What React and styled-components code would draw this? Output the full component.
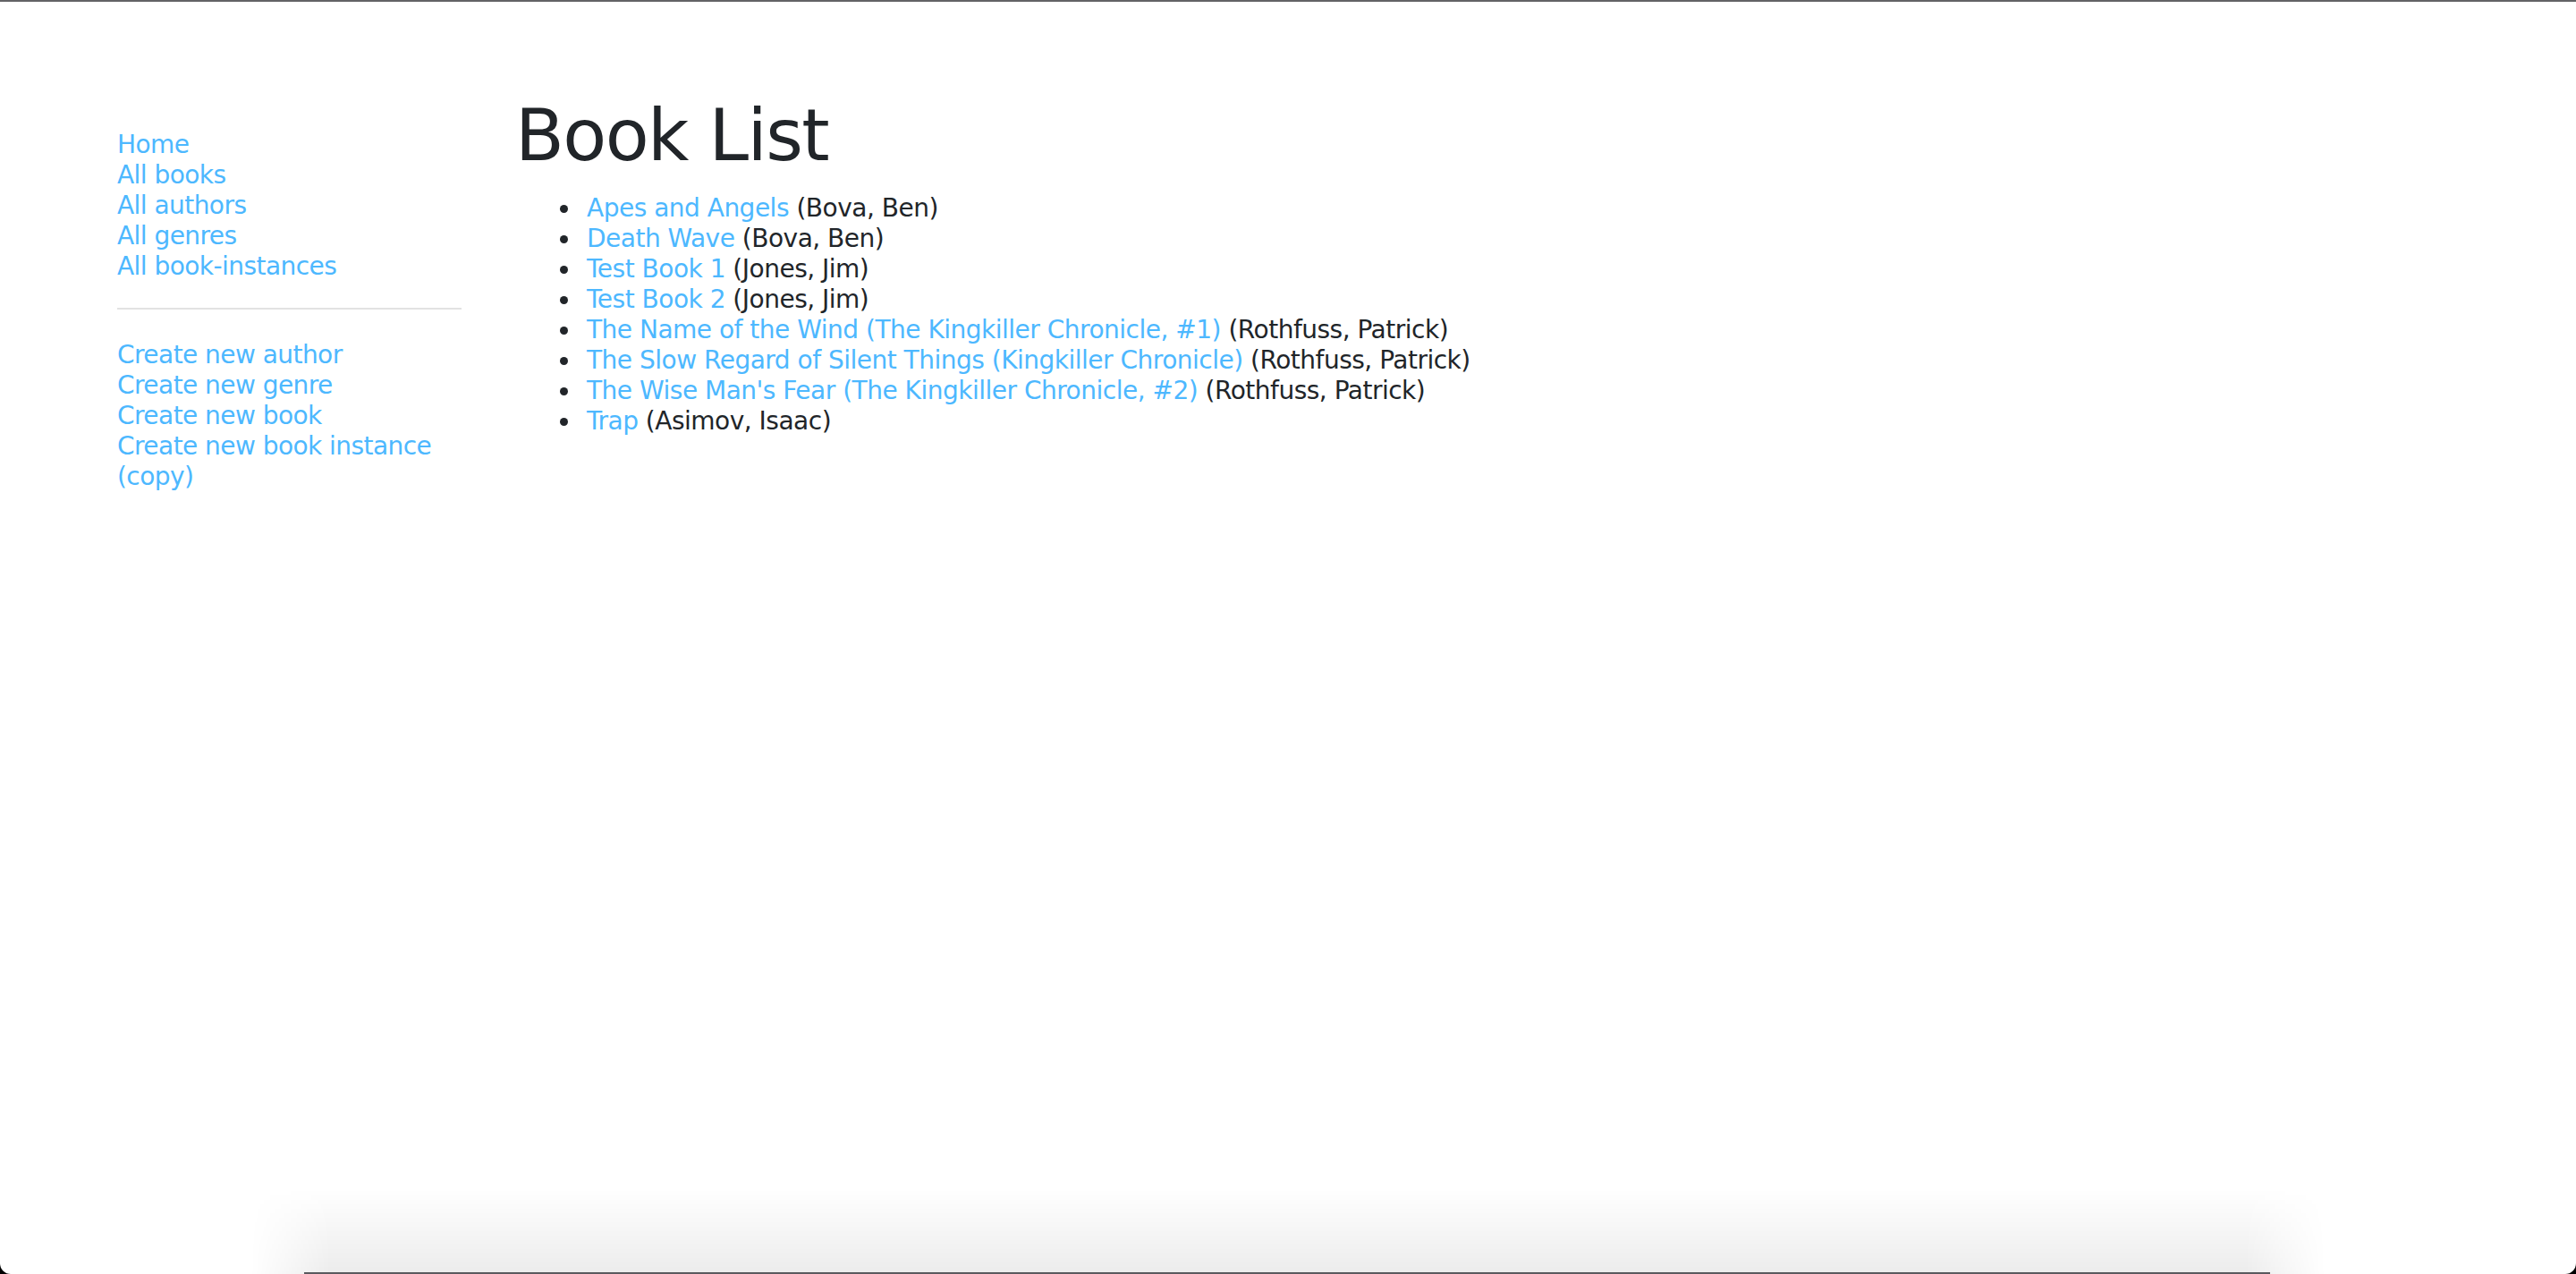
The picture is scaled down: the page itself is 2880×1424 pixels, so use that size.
import styled, { createGlobalStyle } from "styled-components"

const GlobalStyle = createGlobalStyle`
    html, body {
        margin: 0;
        padding: 0;
        background: #000;
    }
    body {
        font-family: "DejaVu Sans", "Verdana", sans-serif;
        color: #212529;
    }
`

const Frame = styled.div`
    position: relative;
    box-sizing: border-box;
    min-height: 1424px;
    background: #fff;
    border-top: 2px solid #636366;
    border-radius: 0 0 12px 12px;
    overflow: hidden;
`

const Layout = styled.div`
    display: flex;
    align-items: flex-start;
    gap: 60px;
    padding: 102px 0 0 131px;
`

const Sidebar = styled.nav`
    width: 385px;
    flex-shrink: 0;
    padding-top: 41px;
`

const NavList = styled.ul`
    list-style: none;
    margin: 0;
    padding: 0;
    font-size: 28px;
    line-height: 34px;
    letter-spacing: -0.55px;
`

const NavLink = styled.a`
    color: #4db8ff;
    text-decoration: none;
`

const Divider = styled.hr`
    margin: 29px 0 34px;
    border: 0;
    border-top: 2px solid #e2e2e2;
`

const Main = styled.main`
    flex: 1;
`

const Title = styled.h1`
    margin: 0 0 16px;
    font-size: 80px;
    font-weight: 400;
    line-height: 1.2;
    letter-spacing: -1.6px;
    color: #212529;
`

const BookList = styled.ul`
    margin: 0;
    padding-left: 74px;
    font-size: 28px;
    line-height: 34px;
    letter-spacing: -0.5px;
    list-style: disc;
`

const BookItem = styled.li`
    padding-left: 6px;
`

const BookLink = styled.a`
    color: #4db8ff;
    text-decoration: none;
`

const Shade = styled.div`
    position: absolute;
    left: 280px;
    right: 280px;
    bottom: 0;
    height: 96px;
    background: linear-gradient(to bottom, rgba(0, 0, 0, 0), rgba(0, 0, 0, 0.075));
    mask-image: linear-gradient(to right, transparent, #000 90px, #000 calc(100% - 90px), transparent);
    pointer-events: none;
`

const ShadeEdge = styled.div`
    position: absolute;
    left: 340px;
    right: 342px;
    bottom: 0;
    height: 2px;
    background: #5a5a5e;
`

const mainLinks = ["Home", "All books", "All authors", "All genres", "All book-instances"]
const createLinks = ["Create new author", "Create new genre", "Create new book", "Create new book instance (copy)"]

const books = [
    { title: "Apes and Angels", author: "Bova, Ben" },
    { title: "Death Wave", author: "Bova, Ben" },
    { title: "Test Book 1", author: "Jones, Jim" },
    { title: "Test Book 2", author: "Jones, Jim" },
    { title: "The Name of the Wind (The Kingkiller Chronicle, #1)", author: "Rothfuss, Patrick" },
    { title: "The Slow Regard of Silent Things (Kingkiller Chronicle)", author: "Rothfuss, Patrick" },
    { title: "The Wise Man's Fear (The Kingkiller Chronicle, #2)", author: "Rothfuss, Patrick" },
    { title: "Trap", author: "Asimov, Isaac" },
]

export default function App() {
    return (
        <>
            <GlobalStyle />
            <Frame>
                <Layout>
                    <Sidebar>
                        <NavList>
                            {mainLinks.map((l) => (
                                <li key={l}><NavLink href="#">{l}</NavLink></li>
                            ))}
                        </NavList>
                        <Divider />
                        <NavList>
                            {createLinks.map((l) => (
                                <li key={l}><NavLink href="#">{l}</NavLink></li>
                            ))}
                        </NavList>
                    </Sidebar>
                    <Main>
                        <Title>Book List</Title>
                        <BookList>
                            {books.map((b) => (
                                <BookItem key={b.title}>
                                    <BookLink href="#">{b.title}</BookLink> ({b.author})
                                </BookItem>
                            ))}
                        </BookList>
                    </Main>
                </Layout>
                <Shade />
                <ShadeEdge />
            </Frame>
        </>
    )
}
